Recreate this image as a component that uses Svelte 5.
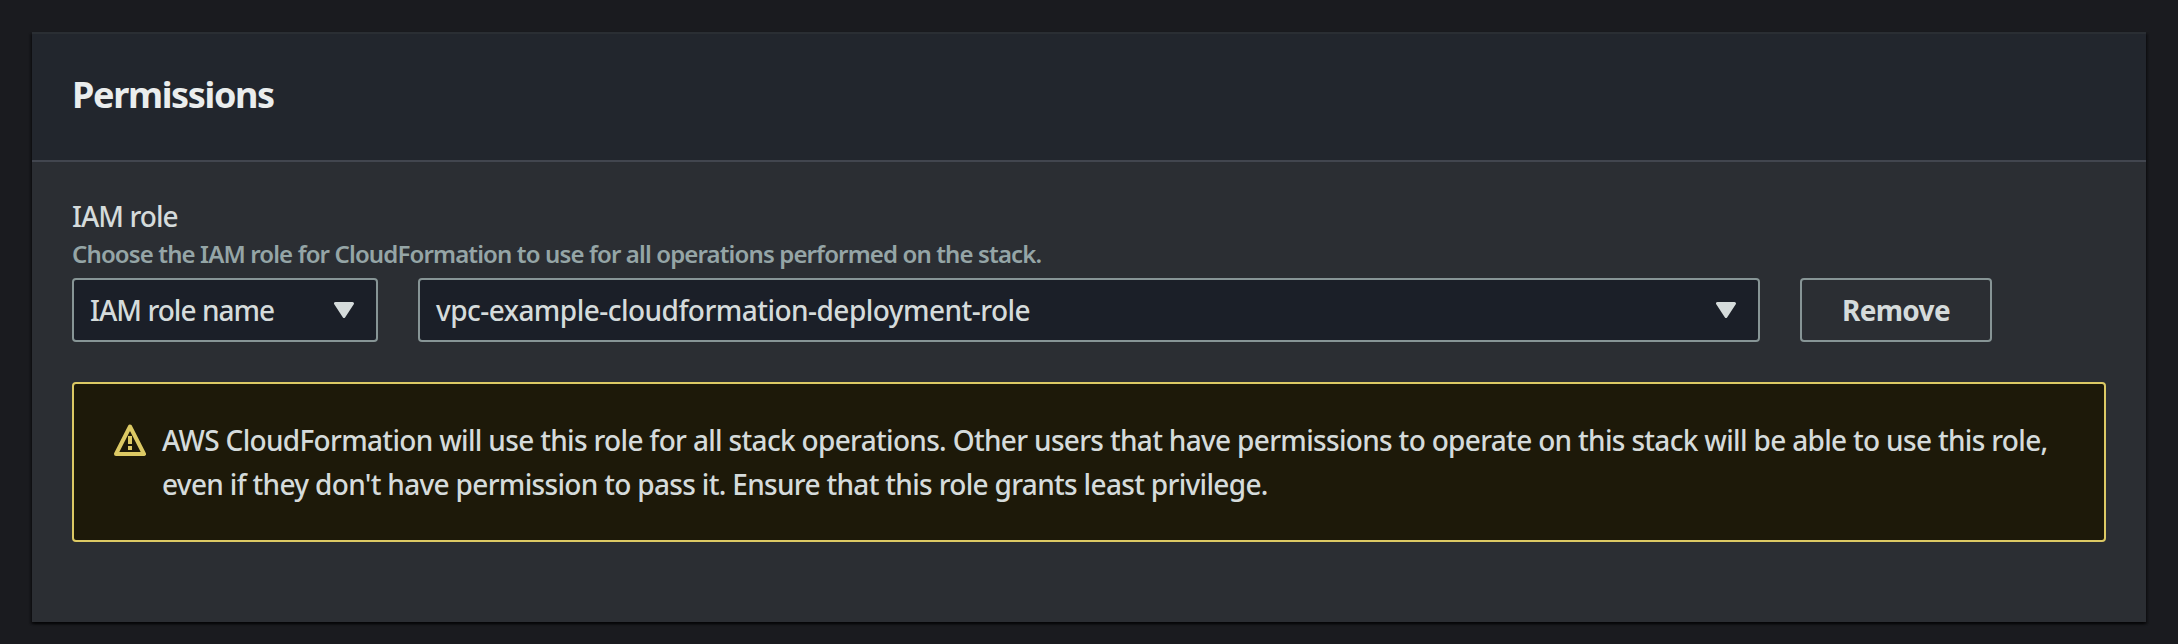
<script lang="ts">
  let searchBy = $state('IAM role name');
  let role = $state('vpc-example-cloudformation-deployment-role');

  const description =
    'Choose the IAM role for CloudFormation to use for all operations performed on the stack.';
  const warningLines = [
    'AWS CloudFormation will use this role for all stack operations. Other users that have permissions to operate on this stack will be able to use this role,',
    "even if they don't have permission to pass it. Ensure that this role grants least privilege."
  ];
</script>

{#snippet caret()}
  <svg class="caret" viewBox="0 0 20 16" aria-hidden="true">
    <path d="M1.5 1.5h17L10 14.5z" />
  </svg>
{/snippet}

<main class="page">
  <section class="card">
    <header class="card-header">
      <h2>Permissions</h2>
    </header>

    <div class="card-body">
      <div class="label">IAM role</div>
      <div class="description">{description}</div>

      <div class="controls">
        <button class="select select-key" type="button" aria-haspopup="listbox">
          <span>{searchBy}</span>
          {@render caret()}
        </button>
        <button class="select select-role" type="button" aria-haspopup="listbox">
          <span>{role}</span>
          {@render caret()}
        </button>
        <button class="remove" type="button">Remove</button>
      </div>

      <div class="alert" role="alert">
        <svg class="alert-icon" viewBox="0 0 32 32" aria-hidden="true">
          <path d="M16 2.5L30 30H2z" />
          <path d="M16 12v8M16 22v4" />
        </svg>
        <div class="alert-copy">
          {#each warningLines as line}
            <div>{line}</div>
          {/each}
        </div>
      </div>
    </div>
  </section>
</main>

<style>
  :global(body) {
    background: #1a1b1f;
  }

  .page {
    box-sizing: border-box;
    height: 644px;
    padding: 32px 32px 22px;
    color: #d5dbdb;
    font-family: 'Noto Sans', 'Open Sans', sans-serif;
    font-size: 28px;
    font-weight: 500;
    line-height: 44px;
    white-space: nowrap;
  }

  .card {
    box-sizing: border-box;
    height: 590px;
    background: #2b2e33;
    box-shadow:
      0 2px 2px rgba(0, 0, 0, 0.5),
      2px 2px 2px rgba(0, 0, 0, 0.3),
      -2px 2px 2px rgba(0, 0, 0, 0.3);
  }

  .card-header {
    box-sizing: border-box;
    height: 130px;
    padding: 37px 40px 0;
    border-top: 2px solid #2a2e33;
    border-bottom: 2px solid #42464f;
    background: #22262d;
  }

  h2 {
    margin: 0;
    color: #eaeded;
    font-size: 36px;
    font-weight: 700;
    letter-spacing: -1.35px;
    line-height: 48px;
  }

  .card-body {
    padding: 32px 40px 0;
  }

  .label {
    height: 42px;
    letter-spacing: -0.95px;
  }

  .description {
    height: 42px;
    color: #95a5a6;
    font-size: 24px;
    font-weight: 600;
    letter-spacing: -0.87px;
    line-height: 36px;
  }

  .controls {
    display: grid;
    grid-template-columns: 306px 1342px 192px;
    gap: 40px;
  }

  .select,
  .remove {
    box-sizing: border-box;
    height: 64px;
    margin: 0;
    border: 2px solid #879596;
    border-radius: 4px;
    color: #d5dbdb;
    font: inherit;
  }

  .select {
    display: flex;
    align-items: center;
    justify-content: space-between;
    padding: 0 22px 0 16px;
    background: #1b1f28;
  }

  .select-key {
    letter-spacing: -0.96px;
  }

  .select-role {
    letter-spacing: -0.53px;
  }

  .caret {
    flex: none;
    width: 20px;
    height: 16px;
    fill: #d5dbdb;
    stroke: #d5dbdb;
    stroke-width: 3;
    stroke-linejoin: round;
  }

  .remove {
    padding: 0;
    background: transparent;
    font-weight: 700;
    letter-spacing: -0.7px;
  }

  .alert {
    box-sizing: border-box;
    display: flex;
    height: 160px;
    margin-top: 40px;
    padding: 34px 40px;
    border: 2px solid #dcc964;
    border-radius: 4px;
    background: #1d1909;
  }

  .alert-icon {
    flex: none;
    width: 32px;
    height: 32px;
    margin: 6px 16px 0 0;
    fill: none;
    stroke: #dcc964;
    stroke-width: 4;
    stroke-linejoin: round;
  }

  .alert-copy {
    letter-spacing: -0.68px;
  }
</style>
